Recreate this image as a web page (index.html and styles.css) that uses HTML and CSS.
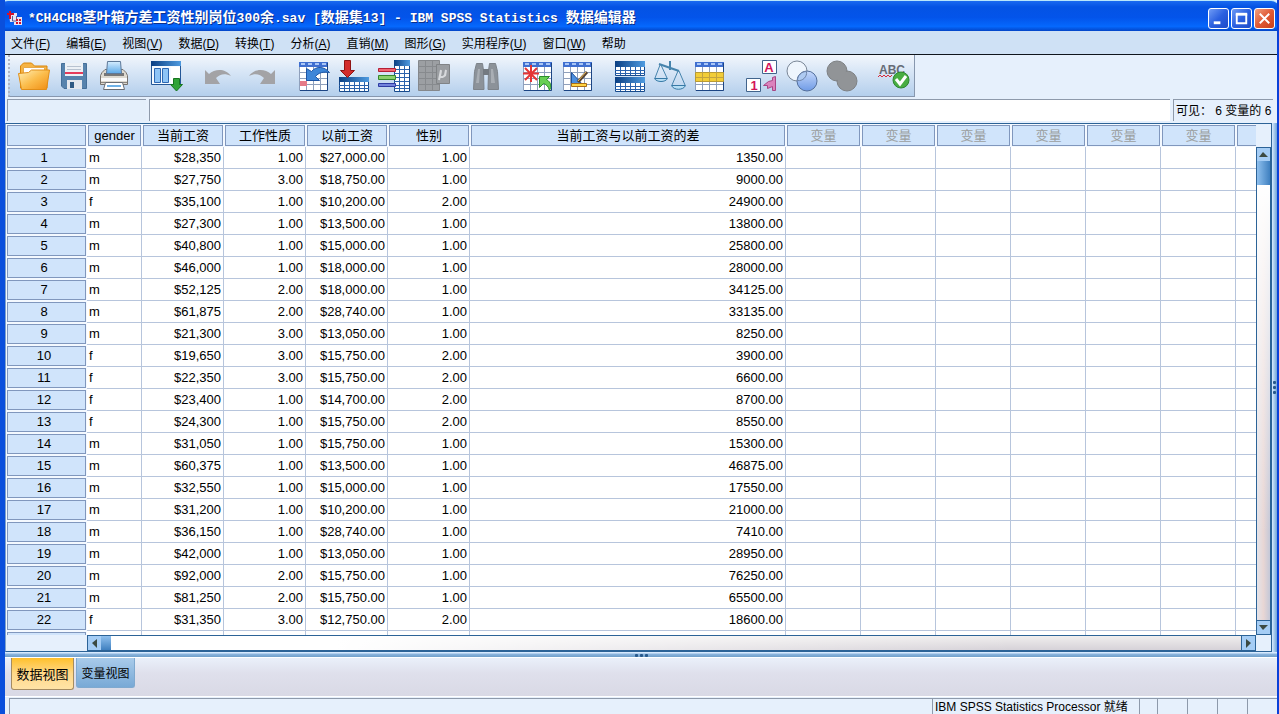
FILE: index.html
```
<!DOCTYPE html>
<html lang="zh-CN">
<head>
<meta charset="utf-8">
<title>IBM SPSS Statistics 数据编辑器</title>
<link rel="stylesheet" href="styles.css">
</head>
<body>
<svg class="defs" aria-hidden="true">
  <defs>
    <linearGradient id="gold" x1="0" y1="0" x2="1" y2="1"><stop offset="0" stop-color="#fff0b8"/><stop offset=".5" stop-color="#fbbd4c"/><stop offset="1" stop-color="#f08c12"/></linearGradient>
    <linearGradient id="blue" x1="0" y1="0" x2="1" y2="0"><stop offset="0" stop-color="#0b3f83"/><stop offset="1" stop-color="#4f9be0"/></linearGradient>
    <linearGradient id="sky" x1="0" y1="0" x2="0" y2="1"><stop offset="0" stop-color="#d6edff"/><stop offset="1" stop-color="#5ba9e8"/></linearGradient>
    <linearGradient id="lilac" x1="0" y1="0" x2="0" y2="1"><stop offset="0" stop-color="#c5d8fb"/><stop offset="1" stop-color="#6f9be6"/></linearGradient>
    <g id="cal">
      <path fill="#fff" stroke="#8fa0bc" d="M1.500 2.500h28v28h-28z"/>
      <path stroke="#8fa0bc" d="M8.500 7v23M15.500 7v23M22.500 7v23M2 12.500h27M2 18.500h27M2 24.500h27"/>
      <path fill="#3f6fd0" d="M1 2h29v5H1z"/>
      <path fill="#a9c6f6" d="M3 3h4v2H3zM10 3h4v2h-4zM17 3h4v2h-4zM24 3h4v2h-4z"/>
      <path fill="none" stroke="#1c4584" d="M29.500 3v27.500H2"/>
    </g>
    <g id="half">
      <path fill="#fff" stroke="#174a8c" d="M1.500.5h29v14h-29z"/>
      <path fill="url(#blue)" d="M1 0h30v6H1z"/>
      <path stroke="#2a62ac" d="M6.500 6v8M11.500 6v8M16.500 6v8M21.500 6v8M26.500 6v8M1 9.500h30M1 12.500h30"/>
    </g>
  </defs>
</svg>
<div class="window">
  <header class="titlebar">
    <svg class="app-icon" viewBox="0 0 16 16" aria-hidden="true"><path fill="#e6e4f4" d="M2 3h8v4h5v8H7v-3H3z"/><path stroke="#d3122c" stroke-width="2" fill="none" d="M0 4h7M3 1v8"/><path stroke="#5a5d92" fill="none" d="M5.500 6v5h4V6"/><path fill="#d3122c" d="M9 9h2v2H9zM12 9h2v2h-2zM9 12h2v2H9zM12 12h2v2h-2z"/></svg>
    <h1 class="title">*CH4CH8<span class="han">茎叶箱方差工资性别岗位</span>300<span class="han">余</span>.sav [<span class="han">数据集</span>13] - IBM SPSS Statistics <span class="han">数据编辑器</span></h1>
    <div class="window-buttons">
      <button class="wb" aria-label="最小化"><svg viewBox="0 0 20 20"><path fill="#fff" d="M5 13h7v3H5z"/></svg></button>
      <button class="wb" aria-label="最大化"><svg viewBox="0 0 20 20"><path fill="none" stroke="#fff" stroke-width="2" d="M5 5v10h10V5"/><path fill="#fff" d="M4 4h12v3H4z"/></svg></button>
      <button class="wb wb-close" aria-label="关闭"><svg viewBox="0 0 20 20"><path stroke="#fff" stroke-width="2" d="M5 5l10 10M15 5L5 15"/></svg></button>
    </div>
  </header>
  <nav class="menubar">
    <button>文件(<u>F</u>)</button><button>编辑(<u>E</u>)</button><button>视图(<u>V</u>)</button><button>数据(<u>D</u>)</button><button>转换(<u>T</u>)</button><button>分析(<u>A</u>)</button><button>直销(<u>M</u>)</button><button>图形(<u>G</u>)</button><button>实用程序(<u>U</u>)</button><button>窗口(<u>W</u>)</button><button>帮助</button>
  </nav>
  <div class="toolbar-row">
    <div class="toolbar" role="toolbar">
      <div class="group">
        <button aria-label="打开"><svg viewBox="0 0 32 32"><path fill="#f6b445" stroke="#d9860c" d="M2.500 28V6l3-3h8l3 3h12.500v22z"/><path fill="#fff" stroke="#e6a94a" d="M5.500 7.500h21v8h-21z"/><path fill="url(#gold)" stroke="#e08e18" d="M.5 13.500l10-1 3-2.500h18L28.500 29.500h-25z"/></svg></button>
        <button aria-label="保存"><svg viewBox="0 0 32 32"><path fill="#5783ad" stroke="#456f99" d="M3.500 3.500h25v25H6l-2.500-2.500z"/><path fill="#edf1f6" d="M7 3h18v13H7z"/><path fill="#e53c5b" d="M7 12h18v2H7z"/><path stroke="#b8c2d0" d="M9 6.500h14M9 9.500h14"/><path fill="#e4e8ee" d="M9 20h15v9H9z"/><path fill="#315b84" d="M12 22h4v6h-4z"/></svg></button>
        <button aria-label="打印"><svg viewBox="0 0 32 32"><path fill="#ddd9d0" stroke="#77736e" d="M4 12.500l3-3h18l3 3 1.500 3v9h-27v-9z"/><path fill="#777" d="M6 13h20v3H6z"/><path fill="url(#sky)" stroke="#5d7898" d="M9.500 1.500h13l1 12h-15z"/><path fill="#fafafa" d="M3 18h26v3H3z"/><path stroke="#8a8681" d="M3 22.500h26"/><path fill="#fff" stroke="#686d75" d="M7.500 22.500h17l2 7h-21z"/><path stroke="#6fb2e7" stroke-width="2" d="M9 26h14"/></svg></button>
      </div>
      <div class="group">
        <button aria-label="调用最近使用的对话框"><svg viewBox="0 0 32 32"><path fill="#f5faff" stroke="#245797" d="M1.500 1.500h29v23h-29z"/><path fill="url(#blue)" d="M1 1h30v5H1z"/><path fill="#8ec4f6" stroke="#2d67b2" d="M4.500 8.500h6v14h-6zM12.500 8.500h6v14h-6z"/><path fill="#fff" d="M21 7h9v16h-9z"/><path fill="#2fa336" stroke="#16751f" d="M23.500 18.500h6v6h3L26.500 31l-6-6.500h3z"/></svg></button>
      </div>
      <div class="group undo">
        <button aria-label="撤消"><svg viewBox="0 0 32 32"><path fill="#a3a3a6" d="M3 10l4 4c6-5 16-6 22 2-6-3-11-2-15 2l4 6H3z"/></svg></button>
        <button aria-label="重做"><svg viewBox="0 0 32 32"><path fill="#a3a3a6" d="M29 10l-4 4C19 9 9 8 3 16c6-3 11-2 15 2l-4 6h15z"/></svg></button>
      </div>
      <div class="group">
        <button aria-label="转到个案"><svg viewBox="0 0 32 32"><use href="#cal"/><path fill="#e57b88" d="M2 21h7v5H2z"/><path fill="#3e86d8" stroke="#1d55a5" d="M8.500 8.500v12h13l-4-4c3-4 8-5 14-4-5-6-13-7-18-1z"/></svg></button>
        <button aria-label="转到变量"><svg viewBox="0 0 32 32"><path fill="#fff" stroke="#174a8c" d="M1.500 17.500h29v14h-29z"/><path fill="url(#blue)" d="M1 17h30v5H1z"/><path stroke="#2a62ac" d="M6.500 22v9M11.500 22v9M16.500 22v9M21.500 22v9M26.500 22v9M1 25.500h30M1 28.500h30"/><path fill="#d32c2c" stroke="#8f1414" d="M6.500.5h6v10h4l-7 7-7-7h4z"/></svg></button>
        <button aria-label="变量"><svg viewBox="0 0 32 32"><path fill="#fff" stroke="#174a8c" d="M16.500.5h15v31h-15z"/><path fill="url(#blue)" d="M16 0h16v6H16z"/><path stroke="#2a62ac" d="M21.500 6v25M26.500 6v25M16 9.500h15M16 13.500h15M16 17.500h15M16 21.500h15M16 25.500h15M16 28.500h15"/><path fill="#ef6570" stroke="#b51f35" d="M.5 8.500h17v3H.5z"/><path fill="#8bd06c" stroke="#35882b" d="M.5 15.500h17v4H.5z"/><path fill="#7383dc" stroke="#2e3ca3" d="M.5 23.500h17v3H.5z"/></svg></button>
        <button aria-label="运行描述统计"><svg viewBox="0 0 32 32"><path fill="#9c9fa3" stroke="#85888c" d="M.5.5h21v30H.5z"/><path stroke="#878a8e" d="M1 6.500h20M1 12.500h20M1 18.500h20M1 24.500h20M7.500 1v29M14.500 1v29"/><path fill="#9a9da1" stroke="#808386" d="M18.500 4.500h13v19h-13z"/><path fill="none" stroke="#d7d9dc" stroke-width="2" d="M21 20l2-10M23 11l-1 5c1 2 4 1 5-1l1-5-1 6"/></svg></button>
      </div>
      <div class="group">
        <button aria-label="查找"><svg viewBox="0 0 32 32"><path fill="#8c9299" stroke="#7d838a" d="M6.500 3.500h6l1 7 .5 19H3.500l1-18zM19.500 3.500h6l2 8 1 18H18l.5-19z"/><path fill="#747a81" d="M13 9h6v6h-6z"/><path fill="#a9aeb4" d="M8 9h2L9 23H6zM21 9h2l2 14h-4z"/></svg></button>
      </div>
      <div class="group">
        <button aria-label="插入个案"><svg viewBox="0 0 32 32"><use href="#cal"/><path stroke="#e53535" stroke-width="2" d="M9 5v17M1 13.500h16M3 8l12 12M15 8L3 20"/><path fill="#67cf53" stroke="#2b8f28" d="M17.500 16.500h10l-3 3c5 3 5 7 3 11-1-4-3-6-6-7l-4 4z"/></svg></button>
        <button aria-label="插入变量"><svg viewBox="0 0 32 32"><use href="#cal"/><path fill="#4c8fdf" stroke="#1e529d" d="M9.500 12.500v12h11z"/><path fill="#ffd443" stroke="#a96d16" d="M9.500 23.500h15v3h-15z"/><path stroke="#554134" stroke-width="3" d="M25 12l-9 10"/><path stroke="#f0be58" d="M24 12l-8 9"/></svg></button>
      </div>
      <div class="group">
        <button aria-label="拆分文件"><svg viewBox="0 0 32 32"><use href="#half" y="1"/><use href="#half" y="17"/></svg></button>
        <button aria-label="加权个案"><svg viewBox="0 0 32 32"><g fill="none" stroke="#4684ad"><path stroke-width="2" d="M5 4l20 7M16 1v9"/><path d="M6 5L1 18M7 5l6 13M24 11l-6 14M25 11l6 14"/></g><path fill="#b7def5" stroke="#3679a6" d="M.5 18.500h13c-2 4-11 4-13 0zM17.500 25.500h14c-2 5-12 5-14 0z"/></svg></button>
        <button aria-label="选择个案"><svg viewBox="0 0 32 32"><use href="#cal"/><path fill="#f2cd38" stroke="#b89a35" d="M1.500 12.500h28v9h-28z"/><path stroke="#c2a340" d="M8.500 12v9M15.500 12v9M22.500 12v9M2 17.500h27"/></svg></button>
      </div>
      <div class="group">
        <button aria-label="值标签"><svg viewBox="0 0 32 32"><path fill="#fff" stroke="#41648c" d="M16.500.5h14v13h-14zM.5 18.500h14v13H.5z"/><text class="glyph" x="23" y="12" text-anchor="middle">A</text><text class="glyph" x="8" y="30" text-anchor="middle">1</text><path fill="#db83bd" stroke="#a74685" d="M29.500 16.500v14h-3v-4l-5 2v-3h-4l5-4 4-1v-3z"/></svg></button>
        <button aria-label="使用变量集"><svg viewBox="0 0 32 32"><circle cx="11" cy="11" r="10" fill="#eef5fd" stroke="#7b8797"/><circle cx="21" cy="21" r="10" fill="url(#lilac)" stroke="#536f9c"/><path fill="#aecaf2" stroke="#6d83a8" d="M11.500 20.500c0-5 4-9 9-9 1 5-4 10-9 9z"/></svg></button>
        <button aria-label="显示所有变量"><svg viewBox="0 0 32 32"><g fill="#919497" stroke="#7e8184"><circle cx="11" cy="11" r="10"/><circle cx="21" cy="21" r="10"/></g><circle cx="11" cy="11" r="9" fill="#919497"/></svg></button>
      </div>
      <div class="group">
        <button aria-label="拼写检查"><svg viewBox="0 0 32 32"><text class="abc" x="1" y="14">ABC</text><path fill="none" stroke="#d82b3c" d="M0 17l2-2 2 2 2-2 2 2 2-2 2 2 2-2"/><circle cx="23" cy="20" r="8" fill="#48ad42" stroke="#2d8731"/><path fill="none" stroke="#fff" stroke-width="3" d="M18 19l4 5 6-8"/></svg></button>
      </div>
    </div>
  </div>
  <div class="cell-editor">
    <div class="cell-name"></div>
    <input class="cell-value" type="text" aria-label="单元格值">
    <div class="visible">可见： 6 变量的 6</div>
  </div>
  <main class="pane">
    <div class="sheet">
      <div class="viewport">
        <table>
          <colgroup><col class="c-row"><col class="c-gender"><col class="c-num"><col class="c-num"><col class="c-num"><col class="c-num"><col class="c-diff"><col class="c-var"><col class="c-var"><col class="c-var"><col class="c-var"><col class="c-var"><col class="c-var"><col class="c-var"></colgroup>
          <thead><tr><th><th>gender<th>当前工资<th>工作性质<th>以前工资<th>性别<th>当前工资与以前工资的差<th class="unused">变量<th class="unused">变量<th class="unused">变量<th class="unused">变量<th class="unused">变量<th class="unused">变量<th></thead>
          <tbody>
            <tr><th>1<td>m<td>$28,350<td>1.00<td>$27,000.00<td>1.00<td>1350.00<td><td><td><td><td><td><td>
            <tr><th>2<td>m<td>$27,750<td>3.00<td>$18,750.00<td>1.00<td>9000.00<td><td><td><td><td><td><td>
            <tr><th>3<td>f<td>$35,100<td>1.00<td>$10,200.00<td>2.00<td>24900.00<td><td><td><td><td><td><td>
            <tr><th>4<td>m<td>$27,300<td>1.00<td>$13,500.00<td>1.00<td>13800.00<td><td><td><td><td><td><td>
            <tr><th>5<td>m<td>$40,800<td>1.00<td>$15,000.00<td>1.00<td>25800.00<td><td><td><td><td><td><td>
            <tr><th>6<td>m<td>$46,000<td>1.00<td>$18,000.00<td>1.00<td>28000.00<td><td><td><td><td><td><td>
            <tr><th>7<td>m<td>$52,125<td>2.00<td>$18,000.00<td>1.00<td>34125.00<td><td><td><td><td><td><td>
            <tr><th>8<td>m<td>$61,875<td>2.00<td>$28,740.00<td>1.00<td>33135.00<td><td><td><td><td><td><td>
            <tr><th>9<td>m<td>$21,300<td>3.00<td>$13,050.00<td>1.00<td>8250.00<td><td><td><td><td><td><td>
            <tr><th>10<td>f<td>$19,650<td>3.00<td>$15,750.00<td>2.00<td>3900.00<td><td><td><td><td><td><td>
            <tr><th>11<td>f<td>$22,350<td>3.00<td>$15,750.00<td>2.00<td>6600.00<td><td><td><td><td><td><td>
            <tr><th>12<td>f<td>$23,400<td>1.00<td>$14,700.00<td>2.00<td>8700.00<td><td><td><td><td><td><td>
            <tr><th>13<td>f<td>$24,300<td>1.00<td>$15,750.00<td>2.00<td>8550.00<td><td><td><td><td><td><td>
            <tr><th>14<td>m<td>$31,050<td>1.00<td>$15,750.00<td>1.00<td>15300.00<td><td><td><td><td><td><td>
            <tr><th>15<td>m<td>$60,375<td>1.00<td>$13,500.00<td>1.00<td>46875.00<td><td><td><td><td><td><td>
            <tr><th>16<td>m<td>$32,550<td>1.00<td>$15,000.00<td>1.00<td>17550.00<td><td><td><td><td><td><td>
            <tr><th>17<td>m<td>$31,200<td>1.00<td>$10,200.00<td>1.00<td>21000.00<td><td><td><td><td><td><td>
            <tr><th>18<td>m<td>$36,150<td>1.00<td>$28,740.00<td>1.00<td>7410.00<td><td><td><td><td><td><td>
            <tr><th>19<td>m<td>$42,000<td>1.00<td>$13,050.00<td>1.00<td>28950.00<td><td><td><td><td><td><td>
            <tr><th>20<td>m<td>$92,000<td>2.00<td>$15,750.00<td>1.00<td>76250.00<td><td><td><td><td><td><td>
            <tr><th>21<td>m<td>$81,250<td>2.00<td>$15,750.00<td>1.00<td>65500.00<td><td><td><td><td><td><td>
            <tr><th>22<td>f<td>$31,350<td>3.00<td>$12,750.00<td>2.00<td>18600.00<td><td><td><td><td><td><td>
            <tr><th><td><td><td><td><td><td><td><td><td><td><td><td><td>
          </tbody>
        </table>
      </div>
      <div class="vscroll">
        <button aria-label="向上"><svg viewBox="0 0 9 5"><path fill="#3c4a42" d="M0 5l4-5 5 5z"/></svg></button>
        <div class="thumb"></div>
        <div class="track"></div>
        <button aria-label="向下"><svg viewBox="0 0 9 5"><path fill="#3c4a42" d="M0 0l4 5 5-5z"/></svg></button>
      </div>
      <div class="hscroll">
        <button aria-label="向左"><svg viewBox="0 0 5 9"><path fill="#3c4a42" d="M5 0L0 4l5 5z"/></svg></button>
        <div class="thumb"></div>
        <div class="track"></div>
        <button aria-label="向右"><svg viewBox="0 0 5 9"><path fill="#3c4a42" d="M0 0l5 4-5 5z"/></svg></button>
      </div>
    </div>
    <div class="vsplit"><i></i><i></i><i></i></div>
  </main>
  <div class="hsplit"><i></i><i></i><i></i></div>
  <div class="views">
    <button class="view active">数据视图</button>
    <button class="view">变量视图</button>
  </div>
  <footer class="status">
    <div class="s-main"></div><div class="s-text">IBM SPSS Statistics Processor 就绪</div><div class="s-a"></div><div class="s-b"></div><div class="s-b"></div><div class="s-b"></div><div class="s-b"></div>
  </footer>
</div>
</body>
</html>
```
FILE: styles.css
```
* { box-sizing: border-box; }
body {
  margin: 0;
  font-family: "Liberation Sans", "Noto Sans CJK SC", sans-serif;
  font-size: 12px;
  color: #000;
}
button, input { font: inherit; color: inherit; padding: 0; border: 0; background: none; }
svg { display: block; }
.defs { position: absolute; width: 0; height: 0; }
.window {
  display: flex;
  flex-direction: column;
  height: 100vh;
  overflow: hidden;
  background: #e6f0fc;
  border-left: 5px solid #0a4fdc;
  border-right: 2px solid #0a40d8;
}

.titlebar {
  display: flex;
  align-items: center;
  flex: none;
  height: 31px;
  margin: 0 -2px 0 -5px;
  padding: 4px 4px 0 7px;
  gap: 5px;
  border-top: 1px solid #b8e6fb;
  border-radius: 8px 8px 0 0;
  background: linear-gradient(#1a6af0, #0453e4 20%, #0354ea 55%, #0568fd 85%, #0345c8);
}
.app-icon { width: 16px; height: 16px; }
.title {
  flex: 1;
  margin: 0;
  font: bold 13px/20px "Liberation Mono", "Noto Sans CJK SC", monospace;
  color: #fff;
  white-space: pre;
  text-shadow: 1px 1px 0 #0a2f8c;
}
.han { font-size: 14px; }
.window-buttons { display: flex; gap: 2px; }
.wb {
  width: 21px;
  height: 21px;
  border: 1px solid #fff;
  border-radius: 3px;
  background: linear-gradient(135deg, #6f9bf5, #2b60e0 50%, #1d4bc8);
}
.wb-close { background: linear-gradient(135deg, #f0a080, #e05a35 50%, #c8401c); }

.menubar {
  display: flex;
  flex: none;
  align-items: center;
  gap: 16px;
  height: 24px;
  padding-left: 6px;
  background: #cfe1f5;
  border-bottom: 1px solid #10151c;
}

.toolbar-row { display: flex; flex: none; height: 42px; }
.toolbar {
  display: flex;
  align-items: center;
  gap: 12px;
  padding-left: 4px;
  margin-left: 3px;
  border-left: 2px dotted #b0b4c4;
  border-right: 1px solid #8797ae;
  border-bottom: 1px solid #8797ae;
  background: linear-gradient(#f2f6fc, #dbe8f7 35%, #b4cfec);
}
.group { display: flex; }
.undo { gap: 4px; }
.group button { display: grid; place-items: center; width: 40px; height: 40px; }
.group svg { width: 32px; height: 32px; overflow: visible; }
.glyph { font: bold 13px "Liberation Sans", sans-serif; fill: #d3145a; }
.abc { font: bold 12px "Liberation Sans", sans-serif; fill: #666b76; }

.cell-editor {
  display: flex;
  flex: none;
  gap: 3px;
  height: 22px;
  margin: 2px 4px 2px 2px;
}
.cell-name, .cell-value, .visible {
  border-top: 1px solid #8e9aab;
  border-left: 1px solid #8e9aab;
}
.cell-name { width: 139px; background: #e4effb; }
.cell-value { flex: 1; min-width: 0; background: #fff; border-radius: 0; }
.visible {
  width: 100px;
  padding-left: 2px;
  font-family: "Liberation Sans", "Noto Sans CJK TC", sans-serif;
  line-height: 22px;
  white-space: nowrap;
}

.pane { display: flex; flex: 1; min-height: 0; }
.sheet {
  display: grid;
  grid-template: minmax(0, 1fr) 16px / minmax(0, 1fr) 15px;
  flex: 1;
  min-width: 0;
  border: 1px solid #2c6397;
  border-left: 1px solid #7fa3cb;
}
.viewport { overflow: hidden; background: linear-gradient(90deg, #e9f2fc 81px, #fff 81px); }
table { width: 1305px; table-layout: fixed; border-collapse: separate; border-spacing: 0; font-size: 13px; }
.c-row { width: 81px; }
.c-gender { width: 55px; }
.c-num { width: 82px; }
.c-diff { width: 316px; }
.c-var { width: 75px; }
th {
  padding: 0;
  font-weight: normal;
  background: #d0e4fb;
  border: 1px solid #f4f9ff;
  box-shadow: inset 0 0 0 1px #8097bd;
}
thead th { height: 23px; padding-top: 1px; line-height: 20px; }
.unused { color: #9b9f9f; }
tbody th { height: 22px; line-height: 20px; padding-right: 5px; }
td {
  height: 22px;
  padding: 0 2px;
  line-height: 20px;
  text-align: right;
  border-right: 1px solid #b7c5dc;
  border-bottom: 1px solid #b7c5dc;
}
td:nth-child(2) { text-align: left; }

.vscroll, .hscroll { display: flex; border: 1px solid #2c6397; }
.vscroll { flex-direction: column; margin-top: 23px; }
.hscroll { grid-area: 2 / 1; margin-left: 81px; }
.vscroll button, .hscroll button { display: grid; place-items: center; flex: none; background: #a5cdf5; }
.vscroll button { height: 13px; }
.hscroll button { width: 13px; }
.vscroll svg { width: 9px; height: 5px; }
.hscroll svg { width: 5px; height: 9px; }
.track { flex: 1; }
.vscroll .track {
  background: linear-gradient(#fff, #ffffff00 80%), linear-gradient(90deg, #e4e4ea, #e8d6d4 50%, #c4c8d8);
  border-bottom: 1px solid #2c6397;
}
.hscroll .track {
  background: linear-gradient(90deg, #fff 20%, #ffffff00 80%), linear-gradient(#f0eeee, #d6d2d8);
  border-right: 1px solid #2c6397;
}
.vscroll .thumb { height: 24px; background: linear-gradient(90deg, #8fc0ee, #3f80c0); }
.hscroll .thumb { width: 10px; background: linear-gradient(#8fc0ee, #3f80c0); }

.vsplit, .hsplit { display: flex; flex: none; align-items: center; justify-content: center; gap: 2px; }
.vsplit { flex-direction: column; width: 5px; background: linear-gradient(90deg, #d7eaff, #6fa3d6); }
.hsplit { height: 6px; background: linear-gradient(#d7eaff 1px, #8db6df 2px, #6f9fca 5px, #fff 5px); }
.vsplit i, .hsplit i { width: 3px; height: 3px; background: #27598c; border-radius: 1px; }

.views {
  display: flex;
  flex: none;
  align-items: flex-start;
  gap: 2px;
  height: 38px;
  padding-left: 6px;
  background: linear-gradient(#eaf0fa, #dfe0ec 40%, #d9d9e5);
}
.view {
  height: 30px;
  width: 59px;
  border: 1px solid #7fa9cf;
  border-top: 0;
  border-radius: 0 0 3px 3px;
  background: linear-gradient(#a9cbea, #78a9d6);
}
.view.active {
  width: 63px;
  height: 32px;
  font-size: 13px;
  border: 1px solid #a58c62;
  border-top: 0;
  background: linear-gradient(#ffc02c, #ffd98a 50%, #ffe3a6);
}

.status {
  display: flex;
  flex: none;
  height: 18px;
  padding: 1px 0 0 4px;
  border-top: 1px solid #fff;
}
.status div { border-top: 1px solid #8e9aab; border-left: 1px solid #8e9aab; line-height: 17px; white-space: nowrap; }
.s-main { flex: 1; }
.s-text { width: 207px; padding-left: 2px; }
.s-a { width: 18px; }
.s-b { width: 30px; }
```
